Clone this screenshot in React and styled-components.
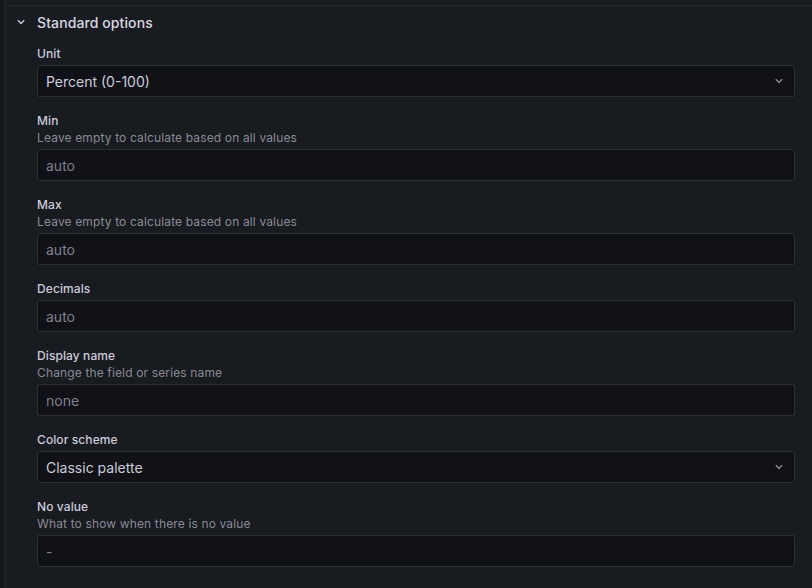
import React from "react";
import styled, { createGlobalStyle } from "styled-components";

const GlobalStyle = createGlobalStyle`
  html, body {
    margin: 0;
    padding: 0;
    background: #141619;
  }
  body {
    font-family: Inter, "Noto Sans", sans-serif;
    color: #ccccdc;
    -webkit-font-smoothing: antialiased;
  }
`;

const fields = [
  { label: "Unit", value: "Percent (0-100)", select: true },
  { label: "Min", description: "Leave empty to calculate based on all values", placeholder: "auto" },
  { label: "Max", description: "Leave empty to calculate based on all values", placeholder: "auto" },
  { label: "Decimals", placeholder: "auto" },
  { label: "Display name", description: "Change the field or series name", placeholder: "none" },
  { label: "Color scheme", value: "Classic palette", select: true },
  { label: "No value", description: "What to show when there is no value", placeholder: "-" },
];

function Chevron({ size = 16 }) {
  return (
    <svg width={size} height={size} viewBox="0 0 24 24" fill="currentColor">
      <path d="M17 9.17a1 1 0 0 0-1.41 0L12 12.71 8.46 9.17a1 1 0 0 0-1.41 0 1 1 0 0 0 0 1.42l4.24 4.24a1 1 0 0 0 1.420 0L17 10.59a1 1 0 0 0 0-1.42Z" />
    </svg>
  );
}

export default function App() {
  return (
    <>
      <GlobalStyle />
      <Pane>
        <PrevSection />
        <Section>
          <Header>
            <Toggle>
              <Chevron />
            </Toggle>
            <Title>Standard options</Title>
          </Header>
          <Body>
            {fields.map((f) => (
              <Field key={f.label}>
                <Label>{f.label}</Label>
                {f.description && <Description>{f.description}</Description>}
                <InputBox>
                  {f.select ? (
                    <>
                      <Value>{f.value}</Value>
                      <Caret>
                        <Chevron />
                      </Caret>
                    </>
                  ) : (
                    <Placeholder>{f.placeholder}</Placeholder>
                  )}
                </InputBox>
              </Field>
            ))}
          </Body>
        </Section>
      </Pane>
    </>
  );
}

const Pane = styled.div`
  margin-left: 4px;
  height: 588px;
  overflow: hidden;
  background: #181b1f;
  border-left: 1px solid #24272c;
`;

const PrevSection = styled.div`
  height: 5px;
  border-bottom: 1px solid #24272c;
`;

const Section = styled.section`
  padding: 0 17px 0 0;
`;

const Header = styled.div`
  display: flex;
  align-items: center;
  height: 32px;
`;

const Toggle = styled.span`
  width: 32px;
  display: flex;
  justify-content: center;
  color: #ccccdc;
  svg {
    margin-left: -1px;
  }
`;

const Title = styled.h3`
  margin: 0;
  font-size: 14px;
  font-weight: 500;
  letter-spacing: 0.1px;
  color: #d8d8e4;
`;

const Body = styled.div`
  display: flex;
  flex-direction: column;
  gap: 15px;
  padding: 7px 0 0 32px;
`;

const Field = styled.div`
  display: flex;
  flex-direction: column;
`;

const Label = styled.div`
  font-size: 12px;
  font-weight: 500;
  line-height: 17px;
  letter-spacing: 0.1px;
  color: #ccccdc;
`;

const Description = styled.div`
  font-size: 12px;
  line-height: 17px;
  letter-spacing: 0.14px;
  color: rgba(204, 204, 220, 0.65);
`;

const InputBox = styled.div`
  margin-top: 3px;
  height: 32px;
  box-sizing: border-box;
  display: flex;
  align-items: center;
  padding: 0 8px;
  background: #111217;
  border: 1px solid #2c2f35;
  border-radius: 2px;
  font-size: 14px;
`;

const Value = styled.span`
  flex: 1;
  color: #ccccdc;
`;

const Placeholder = styled.span`
  color: rgba(204, 204, 220, 0.6);
`;

const Caret = styled.span`
  display: flex;
  color: rgba(204, 204, 220, 0.65);
  margin-right: -1px;
`;
